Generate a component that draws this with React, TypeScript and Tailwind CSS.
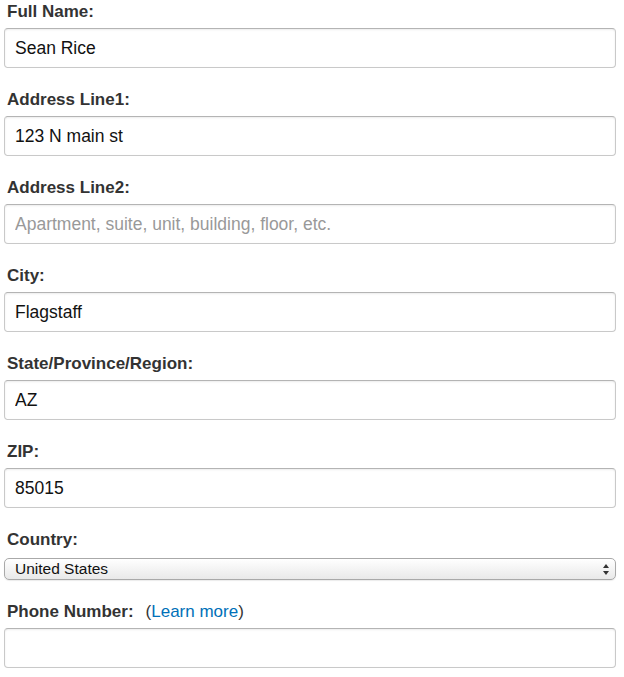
import React from "react";

const font = { fontFamily: '"Liberation Sans", Arial, sans-serif' };

function Label({ children }: { children: React.ReactNode }) {
  return (
    <div className="pl-[3px] text-[17px] leading-[18px] font-bold text-[#333] mb-[7px]">
      {children}
    </div>
  );
}

function Field({ label, value, placeholder }: { label: string; value?: string; placeholder?: string }) {
  return (
    <div className="mb-[23px]">
      <Label>{label}</Label>
      <input
        readOnly
        defaultValue={value}
        placeholder={placeholder}
        className="block w-full h-[40px] rounded-[4px] border border-[#c9c9c9] border-t-[#b4b4b4] bg-white px-[10px] text-[17.5px] text-[#111] placeholder:text-[#999] shadow-[inset_0_1px_2px_rgba(0,0,0,0.08)] outline-none"
        style={font}
      />
    </div>
  );
}

export default function App() {
  return (
    <div className="w-[624px] h-[677px] bg-white pl-[4px] pr-[8px] pt-[3px]" style={font}>
      <Field label="Full Name:" value="Sean Rice" />
      <Field label="Address Line1:" value="123 N main st" />
      <Field label="Address Line2:" placeholder="Apartment, suite, unit, building, floor, etc." />
      <Field label="City:" value="Flagstaff" />
      <Field label="State/Province/Region:" value="AZ" />
      <Field label="ZIP:" value="85015" />
      <div className="mb-[23px]">
        <div className="pl-[3px] text-[17px] leading-[18px] font-bold text-[#333] mb-[9px]">Country:</div>
        <div className="relative h-[22px] rounded-[5px] border border-[#a9a9a9] bg-gradient-to-b from-[#ffffff] to-[#e9e9e9] shadow-[0_1px_1px_rgba(0,0,0,0.08)] flex items-center pl-[10px] text-[15.5px] text-[#111]">
          United States
          <svg className="absolute right-[5px] top-[4px]" width="8" height="13" viewBox="0 0 8 13">
            <path d="M4 1 L7 5 L1 5 Z" fill="#333" />
            <path d="M4 12 L7 8 L1 8 Z" fill="#333" />
          </svg>
        </div>
      </div>
      <div>
        <div className="pl-[3px] text-[17px] leading-[18px] text-[#333] mb-[7px]">
          <span className="font-bold">Phone Number:</span>
          <span className="ml-[12px]">(</span>
          <span className="text-[#0070b8]">Learn more</span>
          <span>)</span>
        </div>
        <input
          readOnly
          className="block w-full h-[40px] rounded-[4px] border border-[#c9c9c9] border-t-[#b4b4b4] bg-white px-[10px] text-[17.5px] shadow-[inset_0_1px_2px_rgba(0,0,0,0.08)] outline-none"
          style={font}
        />
      </div>
    </div>
  );
}
